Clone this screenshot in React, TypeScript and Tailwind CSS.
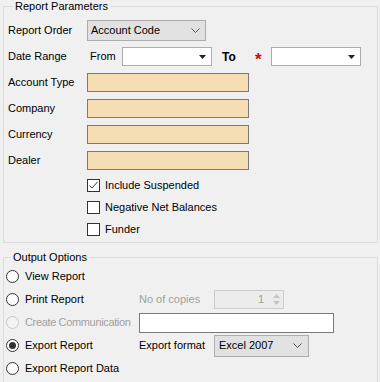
import React from 'react';

const Chevron = () => (
  <svg width="9" height="5" viewBox="0 0 9 5" className="shrink-0">
    <path d="M0.5 0.5 L4.5 4.5 L8.5 0.5" fill="none" stroke="#555" strokeWidth="1" />
  </svg>
);

const Caret = () => (
  <svg width="7" height="4" viewBox="0 0 7 4" className="shrink-0">
    <path d="M0 0 H7 L3.5 4 Z" fill="#222" />
  </svg>
);

const WheatBox = () => (
  <div className="h-[19px] w-[162px] border border-[#7a7a7a] bg-[#f5deb3]" />
);

const Checkbox = ({ checked, label }: { checked?: boolean; label: string }) => (
  <div className="flex h-[22px] items-center pl-[79px]">
    <div className="flex h-[13px] w-[13px] items-center justify-center border border-[#333] bg-white">
      {checked && (
        <svg width="11" height="11" viewBox="0 0 11 11">
          <path d="M1.5 5.5 L4 8 L9.5 2" fill="none" stroke="#333" strokeWidth="1" />
        </svg>
      )}
    </div>
    <span className="ml-[5px]">{label}</span>
  </div>
);

const Radio = ({ checked, disabled, label }: { checked?: boolean; disabled?: boolean; label: string }) => (
  <div className={`flex w-[133px] items-center ${disabled ? 'text-[#a0a0a0]' : ''}`}>
    <div
      className={`flex h-[13px] w-[13px] items-center justify-center rounded-full border ${
        disabled ? 'border-[#c8c8c8] bg-[#f3f3f3]' : 'border-[#333] bg-white'
      }`}
    >
      {checked && <div className="h-[7px] w-[7px] rounded-full bg-[#333]" />}
    </div>
    <span className={`ml-[6px] whitespace-nowrap ${disabled ? 'tracking-[-0.35px]' : ''}`}>{label}</span>
  </div>
);

const App: React.FC = () => {
  return (
    <div
      className="h-[382px] w-[380px] overflow-hidden bg-[#f0f0f0] pl-[3px] pr-[2px] text-[11px] text-black"
      style={{ fontFamily: '"Liberation Sans", Arial, sans-serif' }}
    >
      <fieldset className="border border-[#dcdcdc] pb-[2px] pl-[4px]">
        <legend className="ml-[5px] px-[2px] leading-[13px]">Report Parameters</legend>

        <div className="mt-[7px] flex h-[21px] items-center">
          <span className="w-[79px]">Report Order</span>
          <div className="flex h-[21px] w-[119px] items-center justify-between border border-[#adadad] bg-[#e1e1e1] pl-[3px] pr-[5px]">
            <span>Account Code</span>
            <Chevron />
          </div>
        </div>

        <div className="mt-[6px] flex h-[19px] items-center">
          <span className="w-[82px]">Date Range</span>
          <span className="w-[32px]">From</span>
          <div className="flex h-[19px] w-[90px] items-center justify-end border border-[#adadad] bg-white pr-[5px]">
            <Caret />
          </div>
          <span className="ml-[10px] w-[33px] text-[12px] font-bold">To</span>
          <span className="relative top-[3px] w-[16px] text-[17px] font-bold leading-[19px] text-[#e00000]">*</span>
          <div className="flex h-[19px] w-[90px] items-center justify-end border border-[#adadad] bg-white pr-[5px]">
            <Caret />
          </div>
        </div>

        {['Account Type', 'Company', 'Currency', 'Dealer'].map((l) => (
          <div key={l} className="mt-[7px] flex h-[19px] items-center">
            <span className="w-[79px]">{l}</span>
            <WheatBox />
          </div>
        ))}

        <div className="mt-[4px]">
          <Checkbox checked label="Include Suspended" />
          <Checkbox label="Negative Net Balances" />
          <Checkbox label="Funder" />
        </div>
      </fieldset>

      <fieldset className="mt-[8px] border border-[#dcdcdc] pb-[10px] pl-[2px]">
        <legend className="ml-[5px] px-[2px] leading-[13px]">Output Options</legend>

        <div className="mt-[1px] flex h-[23px] items-center">
          <Radio label="View Report" />
        </div>

        <div className="flex h-[23px] items-center">
          <Radio label="Print Report" />
          <span className="w-[75px] text-[#a0a0a0]">No of copies</span>
          <div className="flex h-[19px] w-[70px] items-center justify-end border border-[#cccccc] bg-[#ececec]">
            <span className="mr-[9px] text-[#a0a0a0]">1</span>
            <div className="mr-[3px] flex flex-col items-center gap-[3px]">
              <svg width="7" height="4" viewBox="0 0 7 4">
                <path d="M0 4 H7 L3.5 0 Z" fill="#c4c4c4" />
              </svg>
              <svg width="7" height="4" viewBox="0 0 7 4">
                <path d="M0 0 H7 L3.5 4 Z" fill="#c4c4c4" />
              </svg>
            </div>
          </div>
        </div>

        <div className="flex h-[23px] items-center">
          <Radio disabled label="Create Communication" />
          <div className="h-[20px] w-[195px] border border-[#7a7a7a] bg-white" />
        </div>

        <div className="flex h-[23px] items-center">
          <Radio checked label="Export Report" />
          <span className="w-[75px]">Export format</span>
          <div className="flex h-[22px] w-[95px] items-center justify-between border border-[#adadad] bg-[#e1e1e1] pl-[4px] pr-[6px]">
            <span>Excel 2007</span>
            <Chevron />
          </div>
        </div>

        <div className="flex h-[23px] items-center">
          <Radio label="Export Report Data" />
        </div>
      </fieldset>
    </div>
  );
};

export default App;
